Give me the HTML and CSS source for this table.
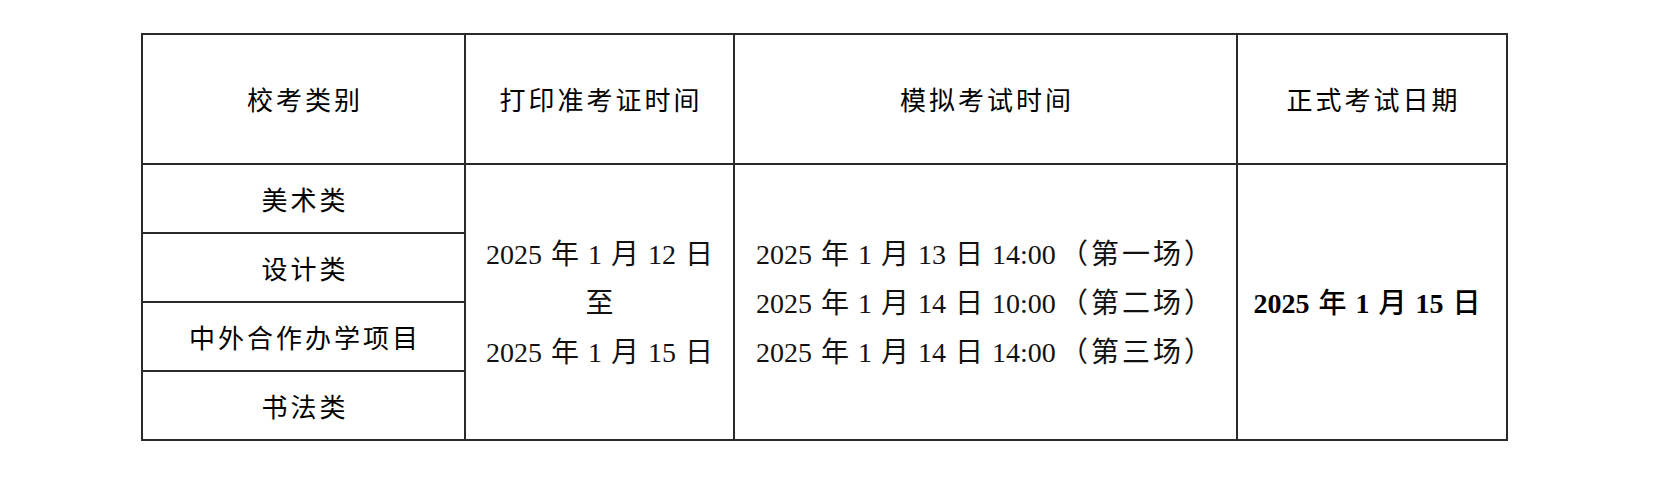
FILE: index.html
```html
<!DOCTYPE html>
<html lang="zh-CN">
<head>
<meta charset="utf-8">
<title>校考安排</title>
<link rel="stylesheet" href="styles.css">
</head>
<body>
<table class="schedule">
  <colgroup>
    <col class="c1"><col class="c2"><col class="c3"><col class="c4">
  </colgroup>
  <thead>
    <tr class="head-row">
      <th class="cjk">校考类别</th>
      <th class="cjk">打印准考证时间</th>
      <th class="cjk">模拟考试时间</th>
      <th class="cjk">正式考试日期</th>
    </tr>
  </thead>
  <tbody>
    <tr class="body-row">
      <td class="cjk">美术类</td>
      <td class="dates" rowspan="4">2025 年 1 月 12 日<br>至<br>2025 年 1 月 15 日</td>
      <td class="dates" rowspan="4">2025 年 1 月 13 日 14:00<span class="paren">（第一场）</span><br>2025 年 1 月 14 日 10:00<span class="paren">（第二场）</span><br>2025 年 1 月 14 日 14:00<span class="paren">（第三场）</span></td>
      <td class="final" rowspan="4">2025 <span class="han">年</span> 1 <span class="han">月</span> 15 <span class="han">日</span></td>
    </tr>
    <tr class="body-row"><td class="cjk">设计类</td></tr>
    <tr class="body-row"><td class="cjk">中外合作办学项目</td></tr>
    <tr class="body-row"><td class="cjk">书法类</td></tr>
  </tbody>
</table>
</body>
</html>
```
FILE: styles.css
```css
html, body {
  margin: 0;
  padding: 0;
  background: #ffffff;
}

body {
  padding: 33px 0 0 141px;
}

.schedule {
  border-collapse: collapse;
  table-layout: fixed;
  width: 1365px;
  border: 2px solid #3a3a3a;
  color: #000;
}

.c1 { width: 323px; }
.c2 { width: 269px; }
.c3 { width: 503px; }
.c4 { width: 270px; }

.schedule th,
.schedule td {
  border: 2px solid #2a2a2a;
  padding: 0;
  text-align: center;
  vertical-align: middle;
  font-weight: normal;
}

.head-row { height: 130px; }
.body-row { height: 69px; }

.schedule .cjk {
  font-family: "Noto Sans CJK SC", "Noto Sans CJK JP", sans-serif;
  font-size: 26px;
  letter-spacing: 3px;
  text-indent: 3px;
  line-height: 1;
}

.schedule .dates {
  font-family: "Liberation Serif", "Noto Sans CJK SC", serif;
  font-size: 28px;
  line-height: 49px;
  word-spacing: 2px;
  color: #111;
  padding-top: 2px;
}

.paren {
  letter-spacing: 3px;
  margin-left: 4px;
}

.schedule .final {
  font-family: "Liberation Serif", "Noto Sans CJK SC", serif;
  font-size: 28px;
  font-weight: bold;
  word-spacing: 2px;
  line-height: 1;
  color: #000;
  padding: 4px 10px 0 0;
}

.schedule .final .han {
  font-weight: 500;
}
```
